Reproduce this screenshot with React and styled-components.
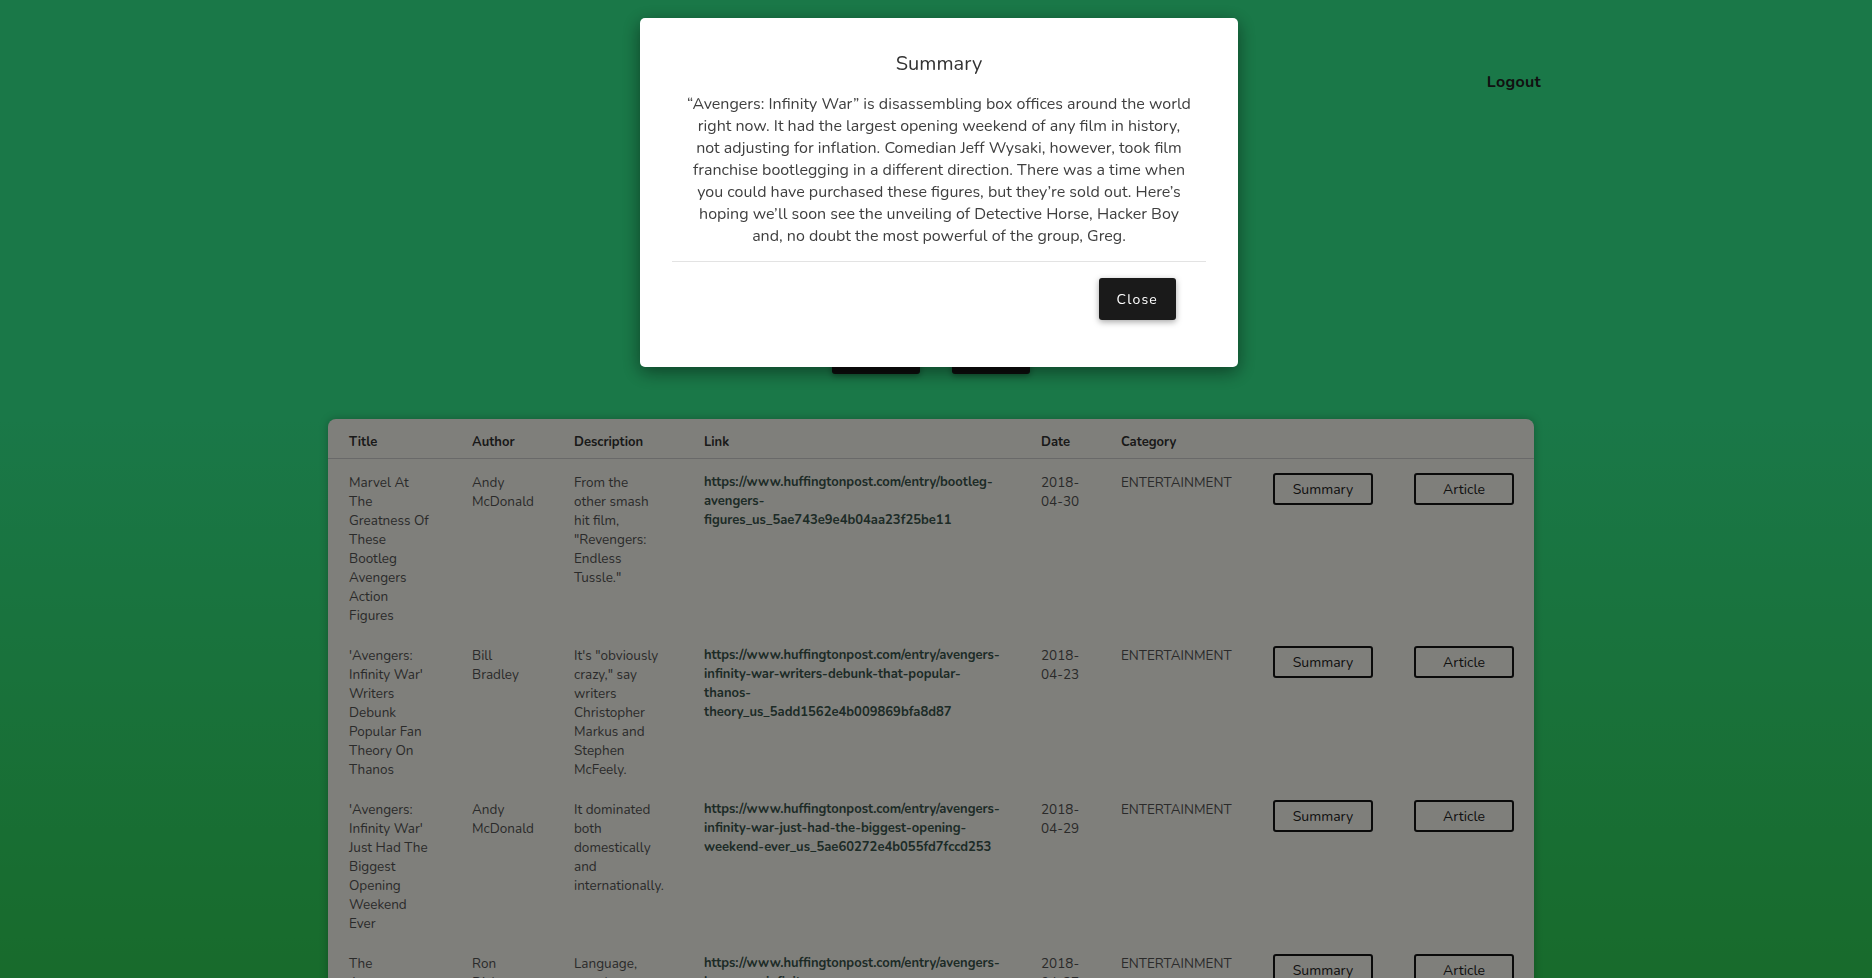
import React from "react";
import styled, { createGlobalStyle } from "styled-components";

const GlobalStyle = createGlobalStyle`
  html, body { margin: 0; padding: 0; }
  body {
    font-family: "Nunito", "Lato", "Open Sans", sans-serif;
    background-color: #30d658;
    background-image: linear-gradient(to bottom, #34f090 0%, #34f090 43%, #30d658 100%);
    background-attachment: fixed;
    color: #555;
    min-height: 100vh;
  }
  * { box-sizing: border-box; }
`;

const Page = styled.div`
  min-height: 100vh;
  padding-right: 10px;
`;

const Container = styled.div`
  width: 1206px;
  margin: 0 auto;
`;

const Nav = styled.nav`
  display: flex;
  justify-content: flex-end;
  padding-top: 71px;
  margin-right: -7px;
`;

const NavLink = styled.a`
  font-size: 16px;
  line-height: 22px;
  font-weight: 700;
  color: #222;
  text-decoration: none;
  letter-spacing: 0.3px;
`;

const Hero = styled.header`
  height: 281px;
  display: flex;
  flex-direction: column;
  align-items: center;
  justify-content: flex-end;
`;

const HeroActions = styled.div`
  display: flex;
  gap: 32px;
`;

const DarkButton = styled.button`
  height: 42px;
  padding: 0 ${(p) => p.$pad || 18}px;
  border: none;
  border-radius: 3px;
  background: #1a1a1a;
  color: #fff;
  font-family: inherit;
  font-size: 14px;
  letter-spacing: 1.2px;
  box-shadow: 0 2px 6px rgba(0, 0, 0, 0.35);
  cursor: pointer;
`;

const Card = styled.section`
  margin-top: 45px;
  background: #fffff7;
  border-radius: 8px;
  box-shadow: 0 0 8px rgba(0, 0, 0, 0.25);
  overflow: hidden;
`;

const cols = "123px 102px 130px 337px 80px 152px 141px 100px";

const HeadRow = styled.div`
  display: grid;
  grid-template-columns: ${cols};
  padding: 14px 20px 6px 21px;
  border-bottom: 1px solid #d2d2d2;
`;

const HeadCell = styled.div`
  font-size: 13px;
  line-height: 19px;
  font-weight: 700;
  color: #333;
`;

const Row = styled.div`
  display: grid;
  grid-template-columns: ${cols};
  align-items: start;
  padding: 14px 20px 7px 21px;
`;

const Cell = styled.div`
  font-size: ${(p) => (p.$link ? "13px" : "13.5px")};
  line-height: 19px;
  color: ${(p) => (p.$link ? "#3a564d" : "#555")};
  font-weight: ${(p) => (p.$link ? 700 : 400)};
  white-space: pre;
`;

const OutlineButton = styled.button`
  width: 100px;
  height: 32px;
  border: 2px solid #141414;
  border-radius: 3px;
  background: transparent;
  color: #222;
  font-family: inherit;
  font-size: 14px;
  cursor: pointer;
`;

const Overlay = styled.div`
  position: fixed;
  inset: 0;
  background: rgba(0, 0, 0, 0.5);
  display: flex;
  justify-content: center;
  align-items: flex-start;
  padding-top: 18px;
  padding-left: 6px;
`;

const Modal = styled.div`
  width: 598px;
  background: #fff;
  border-radius: 5px;
  box-shadow: 0 5px 18px rgba(0, 0, 0, 0.45);
  padding: 33px 32px 47px;
`;

const ModalTitle = styled.h4`
  margin: 0 0 16px;
  font-size: 20px;
  line-height: 26px;
  font-weight: 400;
  color: #333;
  text-align: center;
`;

const ModalBody = styled.p`
  margin: 0;
  font-size: 16px;
  line-height: 22px;
  color: #3f3f3f;
  text-align: center;
  white-space: pre-line;
`;

const Divider = styled.hr`
  margin: 14px 0 0;
  border: none;
  border-top: 1px solid #e3e3e3;
`;

const ModalFooter = styled.div`
  display: flex;
  justify-content: flex-end;
  padding: 16px 30px 0 0;
`;

const rows = [
  {
    title: "Marvel At\nThe\nGreatness Of\nThese\nBootleg\nAvengers\nAction\nFigures",
    author: "Andy\nMcDonald",
    desc: 'From the\nother smash\nhit film,\n"Revengers:\nEndless\nTussle."',
    link: "https://www.huffingtonpost.com/entry/bootleg-\navengers-\nfigures_us_5ae743e9e4b04aa23f25be11",
    date: "2018-\n04-30",
  },
  {
    title: "'Avengers:\nInfinity War'\nWriters\nDebunk\nPopular Fan\nTheory On\nThanos",
    author: "Bill\nBradley",
    desc: 'It\'s "obviously\ncrazy," say\nwriters\nChristopher\nMarkus and\nStephen\nMcFeely.',
    link: "https://www.huffingtonpost.com/entry/avengers-\ninfinity-war-writers-debunk-that-popular-\nthanos-\ntheory_us_5add1562e4b009869bfa8d87",
    date: "2018-\n04-23",
  },
  {
    title: "'Avengers:\nInfinity War'\nJust Had The\nBiggest\nOpening\nWeekend\nEver",
    author: "Andy\nMcDonald",
    desc: "It dominated\nboth\ndomestically\nand\ninternationally.",
    link: "https://www.huffingtonpost.com/entry/avengers-\ninfinity-war-just-had-the-biggest-opening-\nweekend-ever_us_5ae60272e4b055fd7fccd253",
    date: "2018-\n04-29",
  },
  {
    title: "The\nAvengers\nCast Has\nA Word For\nFans",
    author: "Ron\nDicker",
    desc: "Language,\npeople.",
    link: "https://www.huffingtonpost.com/entry/avengers-\nlanguage-infinity-war-\ncast_us_5ae2e1c7e4b02baed1b8a3c1",
    date: "2018-\n04-27",
  },
];

const summary =
  "\u201cAvengers: Infinity War\u201d is disassembling box offices around the world\nright now. It had the largest opening weekend of any film in history,\nnot adjusting for inflation. Comedian Jeff Wysaki, however, took film\nfranchise bootlegging in a different direction. There was a time when\nyou could have purchased these figures, but they\u2019re sold out. Here\u2019s\nhoping we\u2019ll soon see the unveiling of Detective Horse, Hacker Boy\nand, no doubt the most powerful of the group, Greg.";

export default function App() {
  return (
    <>
      <GlobalStyle />
      <Page>
        <Container>
          <Nav>
            <NavLink href="#">Logout</NavLink>
          </Nav>
          <Hero>
            <HeroActions>
              <DarkButton $pad={19}>Scrape</DarkButton>
              <DarkButton $pad={17}>Saved</DarkButton>
            </HeroActions>
          </Hero>
          <Card>
            <HeadRow>
              <HeadCell>Title</HeadCell>
              <HeadCell>Author</HeadCell>
              <HeadCell>Description</HeadCell>
              <HeadCell>Link</HeadCell>
              <HeadCell>Date</HeadCell>
              <HeadCell>Category</HeadCell>
              <HeadCell />
              <HeadCell />
            </HeadRow>
            {rows.map((r, i) => (
              <Row key={i}>
                <Cell>{r.title}</Cell>
                <Cell>{r.author}</Cell>
                <Cell>{r.desc}</Cell>
                <Cell $link>{r.link}</Cell>
                <Cell>{r.date}</Cell>
                <Cell>ENTERTAINMENT</Cell>
                <div>
                  <OutlineButton>Summary</OutlineButton>
                </div>
                <div>
                  <OutlineButton>Article</OutlineButton>
                </div>
              </Row>
            ))}
          </Card>
        </Container>
      </Page>
      <Overlay>
        <Modal>
          <ModalTitle>Summary</ModalTitle>
          <ModalBody>{summary}</ModalBody>
          <Divider />
          <ModalFooter>
            <DarkButton $pad={18}>Close</DarkButton>
          </ModalFooter>
        </Modal>
      </Overlay>
    </>
  );
}
